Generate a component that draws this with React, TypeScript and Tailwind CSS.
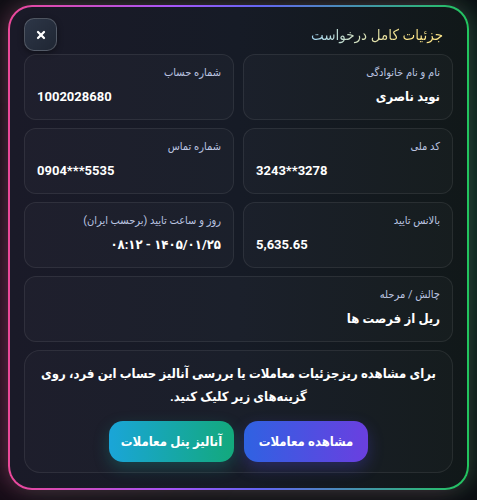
import { X } from "lucide-react";

type Field = {
  label: string;
  value: string;
  ltr?: boolean;
  wide?: boolean;
};

const fields: Field[] = [
  { label: "نام و نام خانوادگی", value: "نوید ناصری" },
  { label: "شماره حساب", value: "1002028680", ltr: true },
  { label: "کد ملی", value: "3243**3278", ltr: true },
  { label: "شماره تماس", value: "0904***5535", ltr: true },
  { label: "بالانس تایید", value: "5,635.65", ltr: true },
  { label: "روز و ساعت تایید (برحسب ایران)", value: "۱۴۰۵/۰۱/۲۵ - ۰۸:۱۲" },
  { label: "چالش / مرحله", value: "ریل از فرصت ها", wide: true },
];

function InfoCard({ label, value, ltr, wide }: Field) {
  return (
    <div
      className={
        "flex h-[66px] flex-col justify-between rounded-xl border border-white/[0.08] bg-white/[0.025] px-3 pt-[10px] pb-[12px] " +
        (wide ? "col-span-2" : "")
      }
    >
      <span className="text-[11px] leading-4 text-[#bcc6e2]">{label}</span>
      <span
        dir={ltr ? "ltr" : "rtl"}
        className="text-[13px] leading-5 font-bold text-white"
        style={{ textAlign: ltr ? "left" : "right" }}
      >
        {value}
      </span>
    </div>
  );
}

export default function App() {
  return (
    <div
      dir="rtl"
      className="relative h-[500px] w-[477px] overflow-hidden bg-[#0d0e13] font-['Roboto','DejaVu_Sans_Condensed','DejaVu_Sans',sans-serif]"
    >
      <div className="pointer-events-none absolute -left-20 bottom-0 h-72 w-56 rounded-full bg-pink-600/10 blur-3xl" />
      <div className="pointer-events-none absolute -right-20 top-10 h-80 w-56 rounded-full bg-emerald-500/10 blur-3xl" />

      <div className="relative mx-[8px] mt-[5px] rounded-[24px] bg-[linear-gradient(90deg,#ec4899,#a855f7_35%,#6366f1_55%,#22c55e)] p-[2px] shadow-[-6px_0_22px_rgba(236,72,153,0.25),6px_0_22px_rgba(34,197,94,0.22)]">
        <div className="rounded-[22px] bg-[linear-gradient(90deg,#1a1a28,#161b26_50%,#111819)] px-[14px] pt-[11px] pb-[15px]">
          <div className="mb-[3px] flex items-center justify-between">
            <h2 className="mr-[10px] bg-[linear-gradient(270deg,#fde68a,#fde68a_30%,#a5d8f5)] bg-clip-text text-[15px] leading-6 font-medium text-transparent">
              جزئیات کامل درخواست
            </h2>
            <button className="flex h-[33px] w-[33px] items-center justify-center rounded-[10px] border border-white/20 bg-[linear-gradient(135deg,#2d3647,#1f2633)] shadow-[0_2px_6px_rgba(0,0,0,0.4)]">
              <X className="h-[12px] w-[12px] text-white" strokeWidth={4.5} />
            </button>
          </div>

          <div className="grid grid-cols-2 gap-x-[9px] gap-y-2">
            {fields.map((f) => (
              <InfoCard key={f.label} {...f} />
            ))}

            <div className="col-span-2 flex flex-col items-center rounded-2xl border border-white/[0.08] bg-white/[0.02] px-2 pt-[11px] pb-[10px]">
              <p className="text-center text-[13px] leading-[23px] font-bold text-white">
                برای مشاهده ریزجزئیات معاملات یا بررسی آنالیز حساب این فرد، روی
                گزینه‌های زیر کلیک کنید.
              </p>
              <div className="mt-[13px] flex gap-[10px]">
                <button className="h-[41px] w-[124px] rounded-[14px] bg-[linear-gradient(90deg,#2f62e2,#6a3fe0)] text-[13px] font-bold text-white shadow-[0_6px_16px_rgba(79,70,229,0.3)]">
                  مشاهده معاملات
                </button>
                <button className="h-[41px] w-[125px] rounded-[14px] bg-[linear-gradient(90deg,#1aa5d8,#13a97c)] text-[13px] font-bold text-white shadow-[0_6px_16px_rgba(20,184,166,0.25)]">
                  آنالیز پنل معاملات
                </button>
              </div>
            </div>
          </div>
        </div>
      </div>
    </div>
  );
}
